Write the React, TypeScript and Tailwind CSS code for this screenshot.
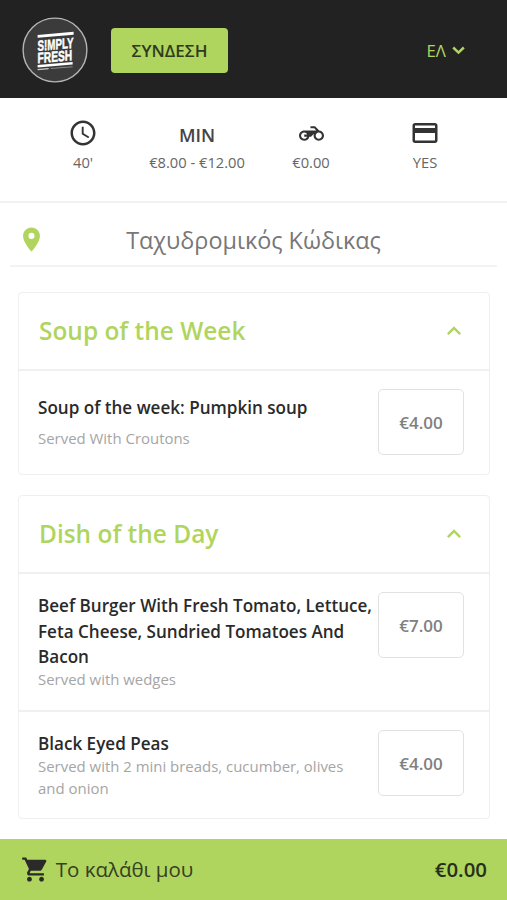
import type { ReactNode } from "react";
import { MdAccessTime, MdCreditCard, MdExpandLess, MdPlace } from "react-icons/md";

function Logo() {
  return (
    <svg className="mt-[2px] overflow-visible" width="66" height="66" viewBox="0 0 66 66" role="img" aria-label="Simply Fresh">
      <circle cx="33" cy="33" r="31.9" fill="#3b3b3b" stroke="#b4b4b4" strokeWidth="1.4" />
      <g fill="#fff" fontFamily="Liberation Sans Narrow, Liberation Sans, Arial, sans-serif" fontWeight="700" transform="translate(15.6 0) skewY(-5)">
        <rect x="0" y="18" width="36" height="2.8" />
        <text x="0" y="34" fontSize="14.8" textLength="36" lengthAdjust="spacingAndGlyphs" stroke="#fff" strokeWidth=".5">S!MPLY</text>
        <text x="0" y="46.2" fontSize="14.8" textLength="34.5" lengthAdjust="spacingAndGlyphs" stroke="#fff" strokeWidth=".5">FRESH</text>
        <rect x="0" y="48" width="35" height="2.6" />
        <rect x="0" y="52" width="11" height="1.2" opacity=".75" />
        <rect x="13" y="52.2" width="22" height="1" opacity=".4" />
      </g>
    </svg>
  );
}

function Motorcycle({ className }: { className: string }) {
  return (
    <svg className={className} viewBox="0 0 24 24" fill="currentColor">
      <path d="M19.44 9.03L15.41 5H11v2h3.59l2 2H5c-2.8 0-5 2.2-5 5s2.2 5 5 5c2.46 0 4.45-1.69 4.9-4h1.65l2.77-2.77c-.21.54-.32 1.14-.32 1.77 0 2.8 2.2 5 5 5s5-2.2 5-5c0-2.65-1.97-4.77-4.56-4.97zM7.82 15C7.4 16.15 6.28 17 5 17c-1.63 0-3-1.37-3-3s1.37-3 3-3c1.28 0 2.4.85 2.82 2H5v2h2.82zM19 17c-1.66 0-3-1.34-3-3s1.34-3 3-3 3 1.34 3 3-1.34 3-3 3z" />
    </svg>
  );
}

function Cart({ className }: { className: string }) {
  return (
    <svg className={className} viewBox="0 0 24 24" fill="currentColor">
      <path d="M7 18c-1.1 0-1.99.9-1.99 2S5.9 22 7 22s2-.9 2-2-.9-2-2-2zM1 2v2h2l3.6 7.59-1.35 2.45c-.16.28-.25.61-.25.96 0 1.1.9 2 2 2h12v-2H7.42c-.14 0-.25-.11-.25-.25l.03-.12.9-1.63h7.45c.75 0 1.41-.41 1.75-1.03l3.58-6.49A1.003 1.003 0 0020 4H5.21l-.94-2H1zm16 16c-1.1 0-1.99.9-1.99 2s.89 2 1.99 2 2-.9 2-2-.9-2-2-2z" />
    </svg>
  );
}

function ChevronDown({ className }: { className: string }) {
  return (
    <svg className={className} viewBox="0 0 13 9" fill="none" stroke="currentColor" strokeWidth="2.5">
      <path d="M1.2 1.5L6.5 6.6L11.8 1.5" />
    </svg>
  );
}

function Info({ icon, label }: { icon: ReactNode; label: string }) {
  return (
    <div className="flex w-[114px] flex-col items-center">
      <div className="flex h-[30px] items-center justify-center text-[#333]">{icon}</div>
      <div className="mt-[4px] text-[14.7px] leading-5 text-[#666]">{label}</div>
    </div>
  );
}

function Price({ value }: { value: string }) {
  return (
    <button className="flex h-[66px] w-[86px] shrink-0 items-center justify-center rounded-[5px] border border-[#e2e2e2] pt-[2px] text-[17px] font-semibold text-[#808080]">
      {value}
    </button>
  );
}

function CardHeader({ title }: { title: string }) {
  return (
    <div className="flex h-[76px] items-center justify-between pr-[21px] pl-5 text-[#b0d55f]">
      <h2 className="text-[24.45px] font-semibold">{title}</h2>
      <MdExpandLess className="size-[28px]" />
    </div>
  );
}

export default function App() {
  return (
    <div className="flex h-[900px] w-[507px] flex-col overflow-hidden bg-white font-['Open_Sans','Noto_Sans',sans-serif] text-[#2a2a2a]">
      <header className="flex h-[98px] shrink-0 items-center bg-[#222] pr-[42px] pl-[22px]">
        <Logo />
        <button className="mt-[2px] ml-[23px] h-[45px] w-[117px] rounded bg-[#b0d55f] pt-px text-[17px] font-semibold text-[#2f3b1c]">ΣΥΝΔΕΣΗ</button>
        <div className="mt-[2px] ml-auto flex items-center gap-[6px] pt-px text-[16.8px] text-[#b0d55f]">
          ΕΛ
          <ChevronDown className="h-[9px] w-[13px]" />
        </div>
      </header>

      <section className="flex h-[105px] shrink-0 border-b-2 border-[#f1f1f1] pt-[20px] pl-[26px]">
        <Info icon={<MdAccessTime className="size-[30px]" />} label="40'" />
        <Info icon={<span className="pt-[4px] text-[18px] font-semibold text-[#444]">MIN</span>} label="€8.00 - €12.00" />
        <Info icon={<Motorcycle className="size-[25px]" />} label="€0.00" />
        <Info icon={<MdCreditCard className="size-[30px]" />} label="YES" />
      </section>

      <div className="mx-[10px] grid h-[64px] shrink-0 grid-cols-[42px_1fr_42px] items-center border-b-2 border-[#f3f3f3] pt-[12px]">
        <MdPlace className="-mt-px ml-[7px] size-[29px] text-[#b0d55f]" />
        <span className="pt-px text-center text-[23.4px] whitespace-nowrap text-[#777]">Ταχυδρομικός Κώδικας</span>
      </div>

      <main className="mr-[17px] ml-[18px] mt-[25px] flex flex-col gap-5">
        <section className="rounded border border-[#efefef]">
          <CardHeader title="Soup of the Week" />
          <div className="flex h-[105px] justify-between border-t-2 border-[#f0f0f0] pt-[18px] pr-[25px] pl-[19px]">
            <div className="pt-[6px]">
              <h3 className="text-[17.08px] leading-[26px] font-semibold">Soup of the week: Pumpkin soup</h3>
              <p className="mt-[6px] text-[14.95px] leading-[22px] text-[#a5a5a5]">Served With Croutons</p>
            </div>
            <Price value="€4.00" />
          </div>
        </section>

        <section className="rounded border border-[#efefef]">
          <CardHeader title="Dish of the Day" />
          <div className="flex h-[138px] justify-between border-t-2 border-[#f0f0f0] pt-[18px] pr-[25px] pl-[19px]">
            <div className="w-[340px] pt-px">
              <h3 className="text-[17.08px] leading-[25.7px] font-semibold whitespace-nowrap">
                Beef Burger With Fresh Tomato, Lettuce,
                <br />
                Feta Cheese, Sundried Tomatoes And
                <br />
                Bacon
              </h3>
              <p className="-mt-[2px] text-[14.95px] leading-[22px] text-[#a5a5a5]">Served with wedges</p>
            </div>
            <Price value="€7.00" />
          </div>
          <div className="flex h-[108px] justify-between border-t-2 border-[#f0f0f0] pt-[18px] pr-[25px] pl-[19px]">
            <div className="w-[340px] pt-px">
              <h3 className="text-[17.08px] leading-[25.7px] font-semibold">Black Eyed Peas</h3>
              <p className="-mt-[2px] text-[14.95px] leading-[22px] whitespace-nowrap text-[#a5a5a5]">
                Served with 2 mini breads, cucumber, olives
                <br />
                and onion
              </p>
            </div>
            <Price value="€4.00" />
          </div>
        </section>
      </main>

      <footer className="mt-auto flex h-[61px] shrink-0 items-center bg-[#b0d55f] pr-[20px] pl-[20.7px]">
        <Cart className="size-[29px]" />
        <span className="ml-[6px] text-[20.5px] text-[#35411f]">Το καλάθι μου</span>
        <span className="ml-auto text-[20.4px] font-semibold text-[#263018]">€0.00</span>
      </footer>
    </div>
  );
}
